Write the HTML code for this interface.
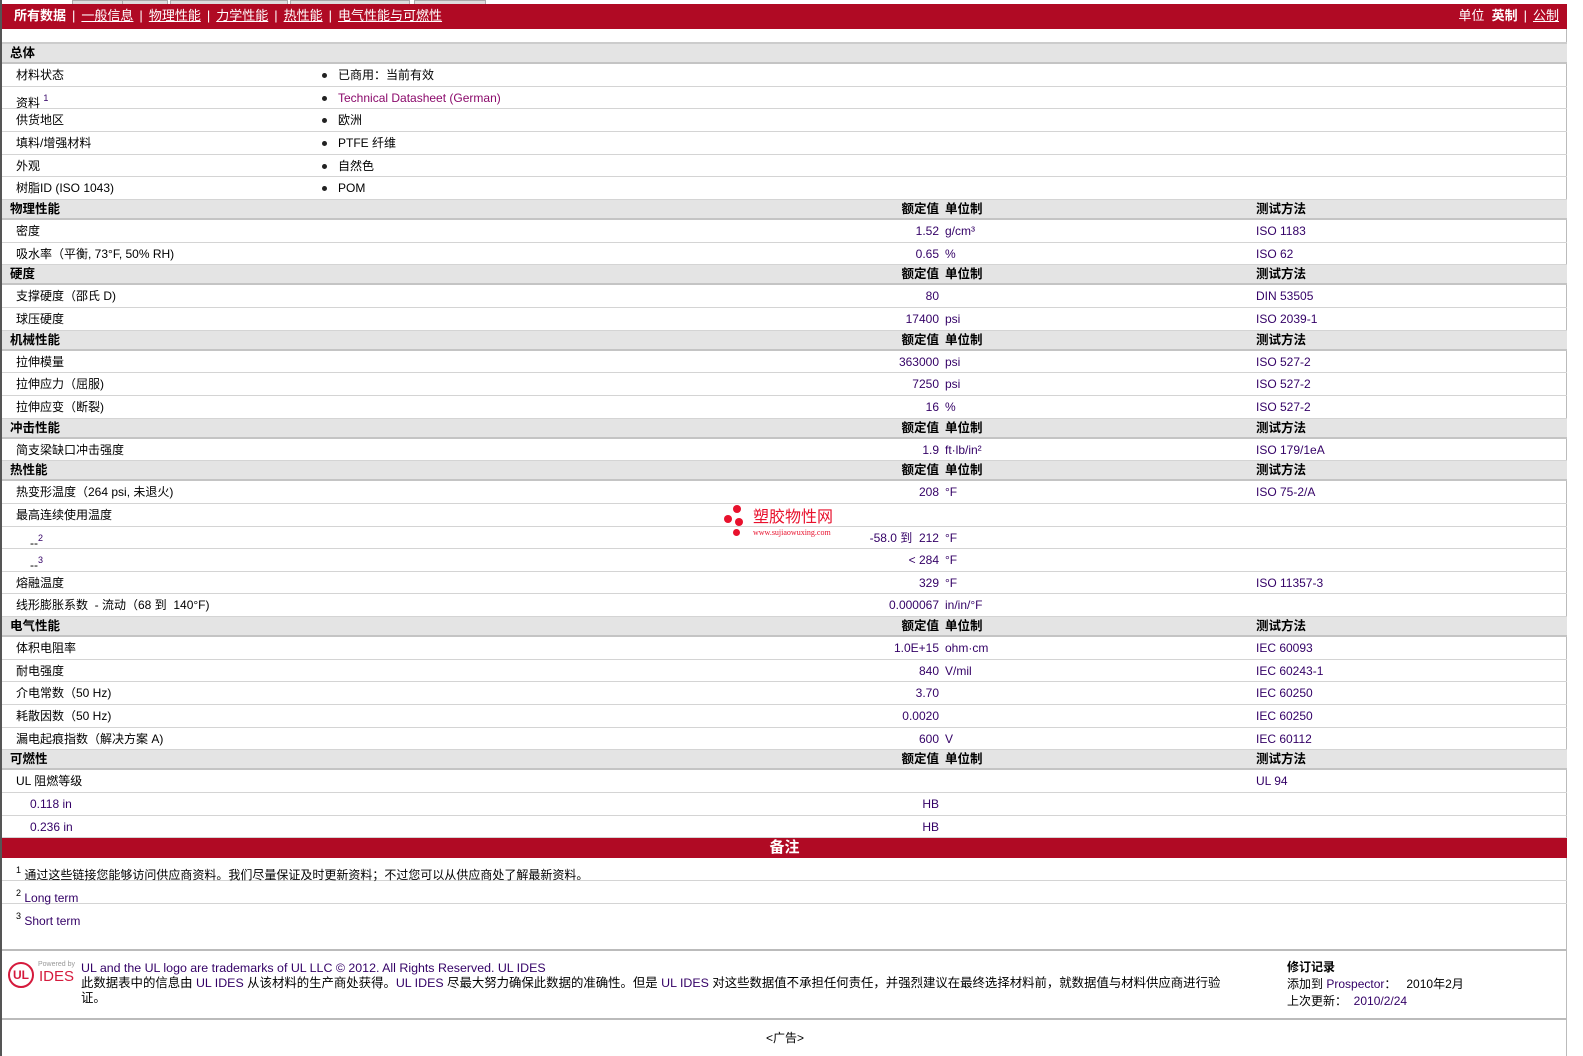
<!DOCTYPE html>
<html><head><meta charset="utf-8"><style>
*{margin:0;padding:0;box-sizing:border-box}
body{width:1583px;height:1056px;background:#fff;font-family:"Liberation Sans","Noto Sans CJK SC",sans-serif;font-size:12px;color:#000;position:relative;overflow:hidden}
#wrap{position:absolute;left:0;top:0;width:1567px;height:1056px;border-left:2px solid #555;border-right:1px solid #bbb}
.tabs{position:absolute;left:2px;top:0;height:4px;width:1565px;background:#fff}
.tabs span{position:absolute;top:0;height:4px;background:#ddd;border:1px solid #aaa;border-bottom:none}
.bar{position:absolute;left:0;top:4px;width:1565px;height:25px;background:#b00a24;color:#fff;font-size:13px;line-height:24px}
.bar .bl{position:absolute;left:12px}
.bar .br{position:absolute;right:8px}
.bar a{color:#fff;text-decoration:underline}
.bar b{font-weight:bold}
.sep{margin:0 6px}
#t{position:absolute;left:0;top:42px;width:1565px;border-top:2px solid #ccc}
.h{height:20px;background:#e4e4e4;border-bottom:2px solid #c4c4c4;position:relative;font-weight:bold;font-size:12.5px;line-height:18px}
.r{height:22.67px;border-bottom:1px solid #d4d4d4;position:relative;line-height:22px}
.h .n{position:absolute;left:8px}
.r .n{position:absolute;left:14px}
.v{position:absolute;right:628px;color:#330066}
.u{position:absolute;left:943px;color:#330066}
.m{position:absolute;left:1254px;color:#330066}
.hv{position:absolute;right:628px}
.hu{position:absolute;left:943px}
.hm{position:absolute;left:1254px}
.b{position:absolute;left:320px}
.b::before{content:"";position:absolute;left:0;top:9px;width:5px;height:5px;border-radius:50%;background:#222}
.b span{position:absolute;left:16px;white-space:nowrap}
sup{font-size:9px;vertical-align:6px;color:#330066}
.note{height:22.67px;border-bottom:1px solid #d4d4d4;line-height:24px;padding-left:14px}
.red{height:20px;background:#b00a24;color:#fff;text-align:center;font-size:15px;line-height:19px;font-weight:bold}
.pu{color:#330066}
</style></head><body><div id="wrap">
<div class="tabs"><span style="left:68px;width:68px"></span><span style="left:118px;width:46px"></span><span style="left:166px;width:118px"></span><span style="left:286px;width:120px"></span><span style="left:410px;width:72px"></span></div>
<div class="bar"><div class="bl"><b>所有数据</b><span class="sep">|</span><a>一般信息</a><span class="sep">|</span><a>物理性能</a><span class="sep">|</span><a>力学性能</a><span class="sep">|</span><a>热性能</a><span class="sep">|</span><a>电气性能与可燃性</a></div><div class="br">单位 &nbsp;<b>英制</b><span class="sep">|</span><a>公制</a></div></div>
<div id="t">
<div class="h"><span class="n">总体</span></div>
<div class="r"><span class="n">材料状态</span><span class="b"><span>已商用：当前有效</span></span></div>
<div class="r"><span class="n">资料 <sup>1</sup></span><span class="b"><span style="color:#8b0a6b">Technical Datasheet (German)</span></span></div>
<div class="r"><span class="n">供货地区</span><span class="b"><span>欧洲</span></span></div>
<div class="r"><span class="n">填料/增强材料</span><span class="b"><span>PTFE 纤维</span></span></div>
<div class="r"><span class="n">外观</span><span class="b"><span>自然色</span></span></div>
<div class="r"><span class="n">树脂ID (ISO 1043)</span><span class="b"><span>POM</span></span></div>
<div class="h"><span class="n">物理性能</span><span class="hv">额定值</span><span class="hu">单位制</span><span class="hm">测试方法</span></div>
<div class="r"><span class="n">密度</span><span class="v">1.52</span><span class="u">g/cm³</span><span class="m">ISO 1183</span></div>
<div class="r"><span class="n">吸水率（平衡, 73°F, 50% RH)</span><span class="v">0.65</span><span class="u">%</span><span class="m">ISO 62</span></div>
<div class="h"><span class="n">硬度</span><span class="hv">额定值</span><span class="hu">单位制</span><span class="hm">测试方法</span></div>
<div class="r"><span class="n">支撑硬度（邵氏 D)</span><span class="v">80</span><span class="m">DIN 53505</span></div>
<div class="r"><span class="n">球压硬度</span><span class="v">17400</span><span class="u">psi</span><span class="m">ISO 2039-1</span></div>
<div class="h"><span class="n">机械性能</span><span class="hv">额定值</span><span class="hu">单位制</span><span class="hm">测试方法</span></div>
<div class="r"><span class="n">拉伸模量</span><span class="v">363000</span><span class="u">psi</span><span class="m">ISO 527-2</span></div>
<div class="r"><span class="n">拉伸应力（屈服)</span><span class="v">7250</span><span class="u">psi</span><span class="m">ISO 527-2</span></div>
<div class="r"><span class="n">拉伸应变（断裂)</span><span class="v">16</span><span class="u">%</span><span class="m">ISO 527-2</span></div>
<div class="h"><span class="n">冲击性能</span><span class="hv">额定值</span><span class="hu">单位制</span><span class="hm">测试方法</span></div>
<div class="r"><span class="n">简支梁缺口冲击强度</span><span class="v">1.9</span><span class="u">ft·lb/in²</span><span class="m">ISO 179/1eA</span></div>
<div class="h"><span class="n">热性能</span><span class="hv">额定值</span><span class="hu">单位制</span><span class="hm">测试方法</span></div>
<div class="r"><span class="n">热变形温度（264 psi, 未退火)</span><span class="v">208</span><span class="u">°F</span><span class="m">ISO 75-2/A</span></div>
<div class="r"><span class="n">最高连续使用温度</span></div>
<div class="r"><span class="n" style="left:28px">--<sup>2</sup></span><span class="v">-58.0 到 &nbsp;212</span><span class="u">°F</span></div>
<div class="r"><span class="n" style="left:28px">--<sup>3</sup></span><span class="v">&lt; 284</span><span class="u">°F</span></div>
<div class="r"><span class="n">熔融温度</span><span class="v">329</span><span class="u">°F</span><span class="m">ISO 11357-3</span></div>
<div class="r"><span class="n">线形膨胀系数 &nbsp;- 流动（68 到 &nbsp;140°F)</span><span class="v">0.000067</span><span class="u">in/in/°F</span></div>
<div class="h"><span class="n">电气性能</span><span class="hv">额定值</span><span class="hu">单位制</span><span class="hm">测试方法</span></div>
<div class="r"><span class="n">体积电阻率</span><span class="v">1.0E+15</span><span class="u">ohm·cm</span><span class="m">IEC 60093</span></div>
<div class="r"><span class="n">耐电强度</span><span class="v">840</span><span class="u">V/mil</span><span class="m">IEC 60243-1</span></div>
<div class="r"><span class="n">介电常数（50 Hz)</span><span class="v">3.70</span><span class="m">IEC 60250</span></div>
<div class="r"><span class="n">耗散因数（50 Hz)</span><span class="v">0.0020</span><span class="m">IEC 60250</span></div>
<div class="r"><span class="n">漏电起痕指数（解决方案 A)</span><span class="v">600</span><span class="u">V</span><span class="m">IEC 60112</span></div>
<div class="h"><span class="n">可燃性</span><span class="hv">额定值</span><span class="hu">单位制</span><span class="hm">测试方法</span></div>
<div class="r"><span class="n">UL 阻燃等级</span><span class="m">UL 94</span></div>
<div class="r"><span class="n pu" style="left:28px">0.118 in</span><span class="v">HB</span></div>
<div class="r"><span class="n pu" style="left:28px">0.236 in</span><span class="v">HB</span></div>
<div class="red">备注</div>
<div class="note"><sup style="color:#000">1</sup> 通过这些链接您能够访问供应商资料。我们尽量保证及时更新资料；不过您可以从供应商处了解最新资料。</div>
<div class="note"><sup style="color:#000">2</sup> <span class="pu">Long term</span></div>
<div class="note" style="border-bottom:none"><sup style="color:#000">3</sup> <span class="pu">Short term</span></div>
</div>
<div style="position:absolute;left:722px;top:505px;width:130px;height:36px">
<div style="position:absolute;left:9px;top:0;width:8px;height:8px;border-radius:50%;background:#e8112d"></div>
<div style="position:absolute;left:0;top:10px;width:8px;height:8px;border-radius:50%;background:#e8112d"></div>
<div style="position:absolute;left:11px;top:13px;width:8px;height:8px;border-radius:50%;background:#e8112d"></div>
<div style="position:absolute;left:9px;top:24px;width:7px;height:7px;border-radius:50%;background:#e8112d"></div>
<div style="position:absolute;left:29px;top:4px;color:#e8112d;font-size:16px;line-height:18px">塑胶物性网</div>
<div style="position:absolute;left:29px;top:23px;color:#e8112d;font-size:8px;font-family:'Liberation Serif',serif">www.sujiaowuxing.com</div>
</div>
<div style="position:absolute;left:0;top:949px;width:1565px;border-top:2px solid #bbb"></div>
<div style="position:absolute;left:6px;top:962px;width:26px;height:26px;border:2px solid #d51a3c;border-radius:50%;color:#d51a3c;font-size:12px;font-weight:bold;text-align:center;line-height:22px">UL</div>
<div style="position:absolute;left:36px;top:961px;color:#999;font-size:7px">Powered by</div>
<div style="position:absolute;left:37px;top:968px;color:#d51a3c;font-size:15px">IDES</div>
<div style="position:absolute;left:79px;top:961px;width:1200px;line-height:15px;font-size:12.4px;white-space:nowrap"><span class="pu">UL and the UL logo are trademarks of UL LLC © 2012. All Rights Reserved. UL IDES</span><br>此数据表中的信息由 <span class="pu">UL IDES</span> 从该材料的生产商处获得。<span class="pu">UL IDES</span> 尽最大努力确保此数据的准确性。但是 <span class="pu">UL IDES</span> 对这些数据值不承担任何责任，并强烈建议在最终选择材料前，就数据值与材料供应商进行验<br>证。</div>
<div style="position:absolute;left:1285px;top:959px;line-height:17px;font-size:12px"><b>修订记录</b><br>添加到 <span class="pu">Prospector</span>： &nbsp;&nbsp;2010年2月<br>上次更新： &nbsp;<span class="pu">2010/2/24</span></div>
<div style="position:absolute;left:0;top:1018px;width:1565px;border-top:2px solid #bbb"></div>
<div style="position:absolute;left:764px;top:1029px;font-size:12px">&lt;广告&gt;</div>
</div></body></html>
